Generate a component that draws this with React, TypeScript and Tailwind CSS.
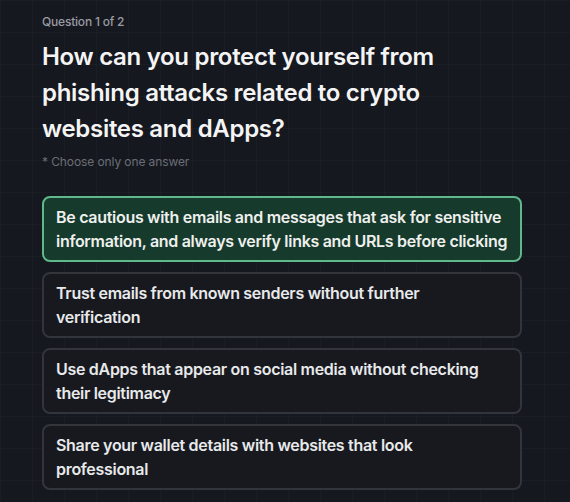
const options = [
  "Be cautious with emails and messages that ask for sensitive information, and always verify links and URLs before clicking",
  "Trust emails from known senders without further verification",
  "Use dApps that appear on social media without checking their legitimacy",
  "Share your wallet details with websites that look professional",
];

const App = () => {
  const selected = 0;

  return (
    <div className="min-h-[502px] w-full bg-[#16181f] bg-[linear-gradient(rgba(255,255,255,0.025)_1px,transparent_1px),linear-gradient(90deg,rgba(255,255,255,0.025)_1px,transparent_1px)] bg-[size:32px_32px] font-['Inter',sans-serif]">
      <div className="w-[522px] pl-[42px] pt-[14px]">
        <p className="text-xs leading-4 font-medium tracking-[-0.2px] text-[#9a9ca3]">Question 1 of 2</p>
        <h1 className="mt-[9px] text-[24px] leading-9 font-semibold tracking-[-0.3px] text-[#f4f4f5]">
          How can you protect yourself from phishing attacks related to crypto websites and dApps?
        </h1>
        <p className="mt-[7px] text-xs leading-4 tracking-[-0.1px] text-[#6b6e76]">* Choose only one answer</p>

        <div className="mt-[26px] flex flex-col gap-[10px]">
          {options.map((opt, i) => (
            <button
              key={i}
              className={
                i === selected
                  ? "rounded-lg border-2 border-[#5fb98b] bg-[#163a2b] py-[7px] pl-[12px] pr-[6px] text-left text-base leading-6 font-semibold tracking-[-0.3px] text-[#eef0ee]"
                  : "rounded-lg border-2 border-[#33353c] bg-[#17191f] py-[7px] pl-[12px] pr-[30px] text-left text-base leading-6 font-semibold tracking-[-0.3px] text-[#e8e9eb]"
              }
            >
              {opt}
            </button>
          ))}
        </div>
      </div>
    </div>
  );
};

export default App;
